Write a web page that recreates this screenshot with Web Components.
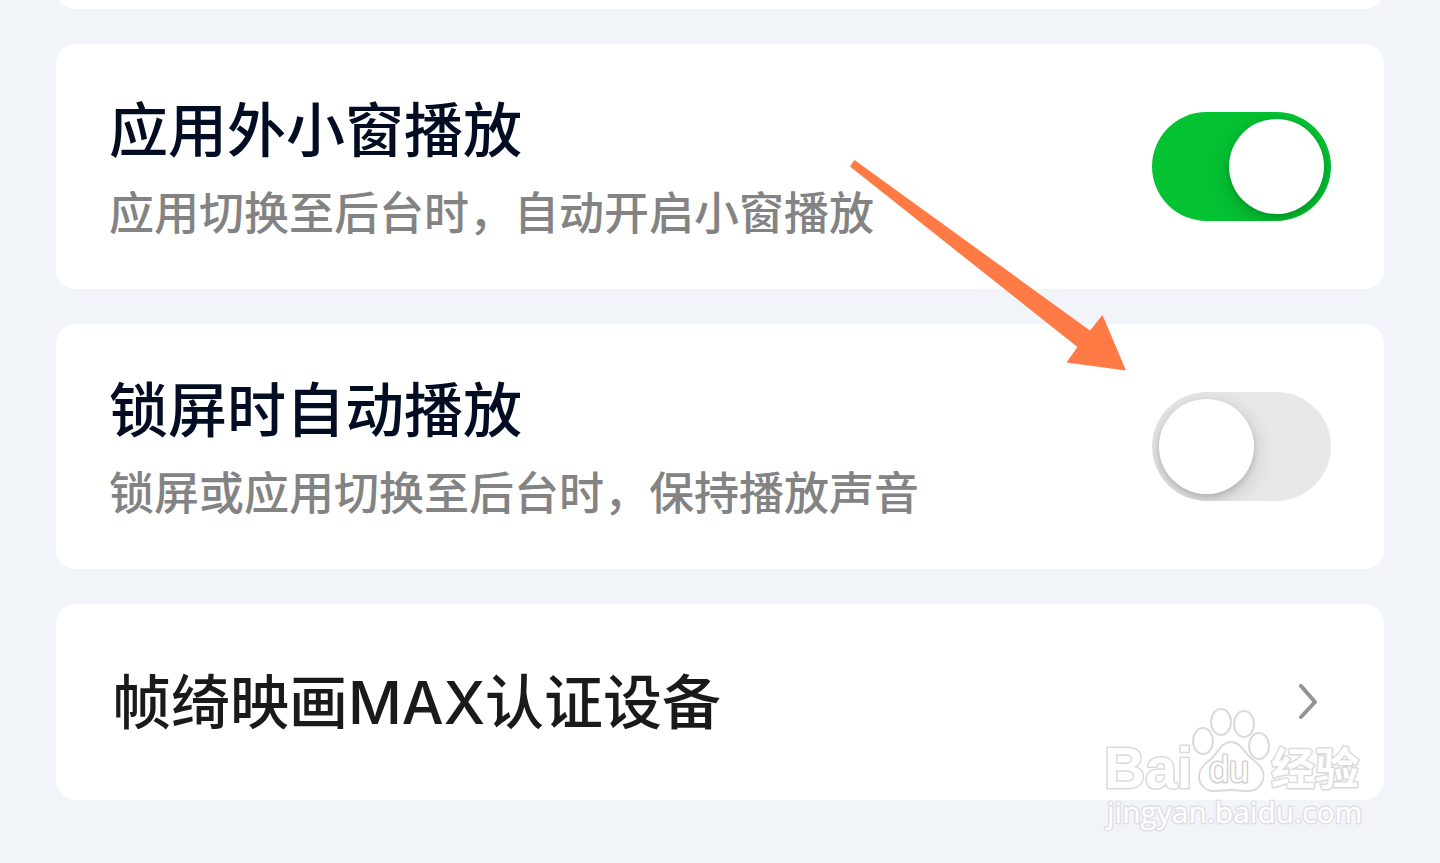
<!DOCTYPE html>
<html lang="zh-CN">
<head>
<meta charset="utf-8">
<meta name="viewport" content="width=device-width, initial-scale=1">
<title>播放设置</title>
<style>
body {
    margin: 0;
    background: #f1f5fa;
    font-family: Inter, "Noto Sans CJK SC", sans-serif;
}
</style>
</head>
<body>
<settings-page>
    <settings-card class="previous"></settings-card>
    <settings-card>
        <setting-switch checked>
            应用外小窗播放
            <span slot="description">应用切换至后台时，自动开启小窗播放</span>
        </setting-switch>
    </settings-card>
    <settings-card>
        <setting-switch>
            锁屏时自动播放
            <span slot="description">锁屏或应用切换至后台时，保持播放声音</span>
        </setting-switch>
    </settings-card>
    <settings-card>
        <setting-link href="#devices">帧绮映画MAX认证设备</setting-link>
    </settings-card>
    <pointer-arrow slot="overlay"></pointer-arrow>
    <site-watermark slot="overlay"></site-watermark>
</settings-page>

<script>
customElements.define("settings-page", class extends HTMLElement {
    constructor() {
        super();
        this.attachShadow({mode: "open"}).innerHTML = `
<style>
:host {
    display: block;
    position: relative;
    min-height: 100vh;
    overflow: hidden;
}
main {
    display: flex;
    flex-direction: column;
    gap: 35px;
    padding: 0 56px 63px;
}
/* the card above is scrolled out, only its lower edge shows */
::slotted(.previous) {
    min-height: 40px;
    margin-top: -31px;
}
</style>
<main><slot></slot></main>
<slot name="overlay"></slot>
`;
    }
});

customElements.define("settings-card", class extends HTMLElement {
    constructor() {
        super();
        this.attachShadow({mode: "open"}).innerHTML = `
<style>
:host {
    display: block;
    border-radius: 20px;
    background: #fff;
}
</style>
<slot></slot>
`;
    }
});

customElements.define("setting-switch", class extends HTMLElement {
    constructor() {
        super();
        this.attachShadow({mode: "open"}).innerHTML = `
<style>
:host {
    display: flex;
    align-items: center;
    justify-content: space-between;
    gap: 24px;
    padding: 45px 53px;
}
label {
    display: flex;
    flex-direction: column;
    gap: 11px;
    font-weight: 500;
}
.title {
    color: #020c22;
    font-size: 59px;
    line-height: 84px;
}
.description {
    color: #838383;
    font-size: 45px;
    line-height: 60px;
}
input {
    appearance: none;
    flex: none;
    box-sizing: border-box;
    width: 179px;
    height: 109px;
    margin: 0;
    padding: 7px;
    border-radius: 55px;
    background: #e8e8e8;
    overflow: hidden;
    cursor: pointer;
}
input::before {
    content: "";
    display: block;
    width: 95px;
    height: 95px;
    border-radius: 50%;
    background: #fff;
    box-shadow: 0 6px 24px rgba(0, 0, 0, .16), 0 3px 6px rgba(0, 0, 0, .14);
}
input:checked {
    background: #04c232;
}
input:checked::before {
    margin-left: auto;
}
</style>
<label for="toggle">
    <span class="title"><slot></slot></span>
    <span class="description"><slot name="description"></slot></span>
</label>
<input type="checkbox" id="toggle">
`;
    }

    connectedCallback() {
        this.shadowRoot.querySelector("input").checked = this.hasAttribute("checked");
    }
});

customElements.define("setting-link", class extends HTMLElement {
    constructor() {
        super();
        this.attachShadow({mode: "open"}).innerHTML = `
<style>
:host {
    display: block;
}
a {
    display: flex;
    align-items: center;
    justify-content: space-between;
    padding: 57px 64px 55px 56px;
    color: #1a1a1a;
    font-size: 59px;
    font-weight: 500;
    line-height: 84px;
    text-decoration: none;
}
svg {
    flex: none;
}
</style>
<a>
    <slot></slot>
    <svg width="22" height="38" viewBox="0 0 22 38" fill="none" stroke="#949494" stroke-width="4" stroke-linecap="round" stroke-linejoin="round" aria-hidden="true">
        <path d="M3 2 L17 18 L3 33"/>
    </svg>
</a>
`;
    }

    connectedCallback() {
        this.shadowRoot.querySelector("a").href = this.getAttribute("href");
    }
});

customElements.define("pointer-arrow", class extends HTMLElement {
    constructor() {
        super();
        this.attachShadow({mode: "open"}).innerHTML = `
<style>
:host {
    position: absolute;
    top: 160px;
    right: 314px;
    pointer-events: none;
}
svg {
    display: block;
}
</style>
<svg width="276" height="211" viewBox="0 0 276 211" aria-hidden="true">
    <path fill="#ff7a45" d="M4.500 0 L240 170.500 L252.500 155 L276 210.500 L216.500 202.500 L227.500 187 L0 6.500 Z"/>
</svg>
`;
    }
});

customElements.define("site-watermark", class extends HTMLElement {
    constructor() {
        super();
        this.attachShadow({mode: "open"}).innerHTML = `
<style>
:host {
    position: absolute;
    top: 705px;
    right: 70px;
    pointer-events: none;
}
svg {
    display: block;
}
text {
    paint-order: stroke;
    stroke-linejoin: round;
}
.brand {
    font: 700 57px "Liberation Sans", sans-serif;
}
.paw {
    font: 400 36px "Liberation Sans", sans-serif;
}
.product {
    font: 700 44px "Noto Sans CJK SC", sans-serif;
}
.url {
    font: 400 30px "Open Sans", sans-serif;
}
</style>
<svg width="270" height="130" viewBox="0 0 270 130" fill="#fff" stroke="#dadada" stroke-width="2">
    <text class="brand" x="4" y="83" stroke-width="3">Bai</text>
    <ellipse cx="103" cy="36" rx="10" ry="13"/>
    <ellipse cx="121" cy="17" rx="10" ry="13"/>
    <ellipse cx="144" cy="19" rx="10" ry="13"/>
    <ellipse cx="159" cy="41" rx="10" ry="13"/>
    <path d="M131 37 C141 37 144 48 152 54 C162 61 167 70 161 79 C154 90 142 85 131 85 C119 85 108 90 101 79 C96 70 101 61 111 54 C118 48 121 37 131 37 Z"/>
    <text class="paw" x="109" y="77" stroke="#cfcfcf" stroke-width="3">du</text>
    <text class="product" x="171" y="80" stroke-width="3">经验</text>
    <text class="url" x="7" y="118" stroke="#dfe0e3" stroke-width="3">jingyan.baidu.com</text>
</svg>
`;
    }
});
</script>
</body>
</html>
